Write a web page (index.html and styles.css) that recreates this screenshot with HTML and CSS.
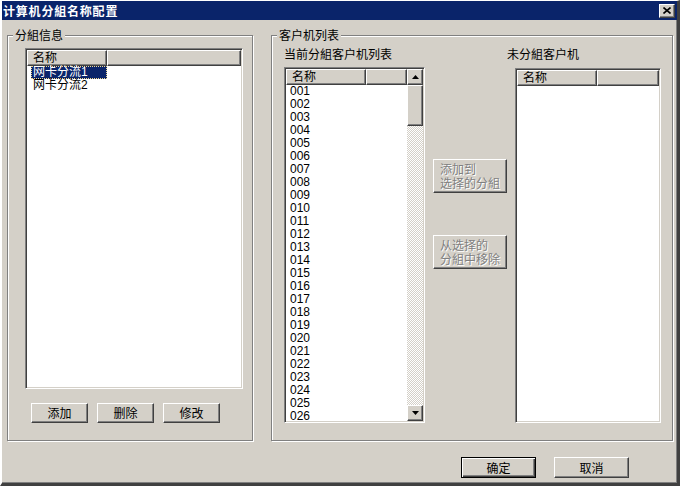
FILE: index.html
```html
<!DOCTYPE html>
<html lang="zh-CN">
<head>
  <meta charset="UTF-8">
  <link rel="stylesheet" href="styles.css">
  <title>计算机分組名称配置</title>
</head>
<body>
  <div class="window">
    <div class="titlebar">
      <span class="title">计算机分組名称配置</span>
      <button class="close-btn" aria-label="关闭">
        <svg width="8" height="7" viewBox="0 0 8 7"><path d="M0.5 0.5 L7.5 6.5 M7.5 0.5 L0.5 6.5" stroke="#000" stroke-width="1.6" fill="none"/></svg>
      </button>
    </div>

    <div class="client">
      <div class="groups">
        <fieldset class="group group-left">
          <legend>分組信息</legend>
          <div class="listview lv-left">
            <div class="lv-header">
              <div class="lv-col">名称</div>
              <div class="lv-col lv-fill"></div>
            </div>
            <ul class="lv-rows">
              <li><span class="selected">网卡分流1</span></li>
              <li><span>网卡分流2</span></li>
            </ul>
          </div>
          <div class="btn-row">
            <button class="btn btn-small">添加</button>
            <button class="btn btn-small">删除</button>
            <button class="btn btn-small">修改</button>
          </div>
        </fieldset>

        <fieldset class="group group-right">
          <legend>客户机列表</legend>
          <div class="client-cols">
            <div class="col-current">
              <div class="col-label">当前分組客户机列表</div>
              <div class="listview lv-current">
                <div class="lv-main">
                  <div class="lv-header">
                    <div class="lv-col">名称</div>
                    <div class="lv-col lv-fill"></div>
                  </div>
                  <ul class="lv-rows lv-numbers">
                    <li><span>001</span></li>
                    <li><span>002</span></li>
                    <li><span>003</span></li>
                    <li><span>004</span></li>
                    <li><span>005</span></li>
                    <li><span>006</span></li>
                    <li><span>007</span></li>
                    <li><span>008</span></li>
                    <li><span>009</span></li>
                    <li><span>010</span></li>
                    <li><span>011</span></li>
                    <li><span>012</span></li>
                    <li><span>013</span></li>
                    <li><span>014</span></li>
                    <li><span>015</span></li>
                    <li><span>016</span></li>
                    <li><span>017</span></li>
                    <li><span>018</span></li>
                    <li><span>019</span></li>
                    <li><span>020</span></li>
                    <li><span>021</span></li>
                    <li><span>022</span></li>
                    <li><span>023</span></li>
                    <li><span>024</span></li>
                    <li><span>025</span></li>
                    <li><span>026</span></li>
                  </ul>
                </div>
                <div class="scrollbar">
                  <div class="sb-btn">
                    <svg width="7" height="4" viewBox="0 0 7 4"><polygon points="0,4 7,4 3.5,0" fill="#000"/></svg>
                  </div>
                  <div class="sb-thumb"></div>
                  <div class="sb-track"></div>
                  <div class="sb-btn">
                    <svg width="7" height="4" viewBox="0 0 7 4"><polygon points="0,0 7,0 3.5,4" fill="#000"/></svg>
                  </div>
                </div>
              </div>
            </div>

            <div class="col-actions">
              <button class="btn btn-move" disabled>添加到<br>选择的分組</button>
              <button class="btn btn-move" disabled>从选择的<br>分組中移除</button>
            </div>

            <div class="col-free">
              <div class="col-label">未分組客户机</div>
              <div class="listview lv-free">
                <div class="lv-header">
                  <div class="lv-col">名称</div>
                  <div class="lv-col lv-fill"></div>
                </div>
              </div>
            </div>
          </div>
        </fieldset>
      </div>

      <div class="dialog-btns">
        <button class="btn btn-dialog btn-default">确定</button>
        <button class="btn btn-dialog">取消</button>
      </div>
    </div>
  </div>
</body>
</html>
```

FILE: styles.css
```css
body {
  margin: 0;
  background: #d4d0c8;
  font-family: "Liberation Sans", "Noto Sans CJK SC", sans-serif;
  font-size: 12px;
  color: #000;
}

.window {
  width: 680px;
  height: 486px;
  box-sizing: border-box;
  background: #d4d0c8;
  border-style: solid;
  border-width: 1px 3px 3px 2px;
  border-color: #fff #404040 #404040 #fff;
  box-shadow: inset -1px -1px #808080;
  display: flex;
  flex-direction: column;
}

/* title bar */
.titlebar {
  height: 19px;
  background: #0a246a;
  display: flex;
  align-items: center;
  justify-content: space-between;
  padding: 0 2px 0 1px;
}

.title {
  color: #fff;
  font-family: "Noto Sans CJK SC", sans-serif;
  font-weight: bold;
  font-size: 12px;
  letter-spacing: 0.8px;
  line-height: 19px;
}

.close-btn {
  width: 16px;
  height: 14px;
  padding: 0;
  background: #d4d0c8;
  border: 1px solid;
  border-color: #fff #404040 #404040 #fff;
  box-shadow: inset -1px -1px #808080;
  display: flex;
  align-items: center;
  justify-content: center;
}

/* client area */
.client {
  flex: 1;
  display: flex;
  flex-direction: column;
  padding: 8px 4px 0 5px;
}

.groups {
  display: flex;
  gap: 18px;
  height: 413px;
}

.group {
  box-sizing: border-box;
  height: 100%;
  margin: 0;
  padding: 0;
  min-width: 0;
  border: 1px solid #808080;
  box-shadow: inset 1px 1px #fff, 1px 1px #fff;
}

.group legend {
  margin-left: 5px;
  padding: 0 2px;
  background: #d4d0c8;
  line-height: 14px;
  font-family: "Noto Sans CJK SC", sans-serif;
}

.group-left {
  width: 246px;
}

.group-right {
  flex: 1;
}

/* list views */
.listview {
  box-sizing: border-box;
  background: #fff;
  border: 1px solid;
  border-color: #808080 #fff #fff #808080;
  padding: 1px;
  box-shadow: inset 1px 1px #404040, inset -1px -1px #d4d0c8;
  overflow: hidden;
}

.lv-left {
  width: 218px;
  height: 341px;
  margin: 6px 0 0 17px;
}

.lv-header {
  display: flex;
  height: 16px;
}

.lv-col {
  box-sizing: border-box;
  width: 80px;
  background: #d4d0c8;
  border: 1px solid;
  border-color: #fff #404040 #404040 #fff;
  box-shadow: inset -1px -1px #808080;
  padding-left: 5px;
  line-height: 14px;
}

.lv-fill {
  flex: 1;
  width: auto;
}

.lv-rows {
  list-style: none;
  margin: 0;
  padding: 0;
}

.lv-rows li {
  height: 13px;
  padding-left: 4px;
  white-space: nowrap;
}

.lv-rows span {
  display: block;
  box-sizing: border-box;
  height: 13px;
  line-height: 11px;
  padding-left: 1px;
  border: 1px dotted transparent;
}

.lv-numbers li {
  padding-left: 2px;
}

.lv-rows span.selected {
  width: 76px;
  background: #0a246a;
  color: #fff;
  border-color: #f0d890;
}

/* right group columns */
.client-cols {
  display: flex;
  padding-left: 12px;
}

.col-label {
  margin-top: 5px;
  height: 14px;
  line-height: 14px;
  font-family: "Noto Sans CJK SC", sans-serif;
}

.col-current {
  width: 141px;
}

.lv-current {
  display: flex;
  height: 356px;
  margin-top: 6px;
}

.lv-main {
  flex: 1;
  min-width: 0;
  overflow: hidden;
}

.scrollbar {
  width: 16px;
  display: flex;
  flex-direction: column;
  background: repeating-conic-gradient(#d4d0c8 0 25%, #fff 0 50%) 0 0 / 2px 2px;
}

.sb-btn,
.sb-thumb {
  box-sizing: border-box;
  background: #d4d0c8;
  border: 1px solid;
  border-color: #fff #404040 #404040 #fff;
  box-shadow: inset -1px -1px #808080;
}

.sb-btn {
  height: 16px;
  display: flex;
  align-items: center;
  justify-content: center;
}

.sb-thumb {
  height: 41px;
}

.sb-track {
  flex: 1;
}

.col-actions {
  width: 74px;
  margin-left: 8px;
  display: flex;
  flex-direction: column;
  gap: 42px;
  padding-top: 117px;
}

.col-free {
  width: 153px;
}

.lv-free {
  width: 146px;
  height: 355px;
  margin: 7px 0 0 8px;
}

/* buttons */
.btn {
  font-family: "Noto Sans CJK SC", sans-serif;
  font-size: 12px;
  color: #000;
  background: #d4d0c8;
  border: 1px solid;
  border-color: #fff #404040 #404040 #fff;
  box-shadow: inset -1px -1px #808080;
  padding: 0;
}

.btn-row {
  display: flex;
  gap: 9px;
  margin: 14px 0 0 23px;
}

.btn-small {
  width: 57px;
  height: 20px;
  line-height: 16px;
}

.btn-move {
  width: 74px;
  height: 34px;
  text-align: left;
  padding-left: 6px;
  line-height: 14px;
  color: #808080;
  text-shadow: 1px 1px #fff;
}

.dialog-btns {
  display: flex;
  justify-content: flex-end;
  gap: 18px;
  margin-top: 16px;
  padding-right: 44px;
}

.btn-dialog {
  width: 75px;
  height: 21px;
}

.btn-default {
  border-color: #000;
  box-shadow: inset 1px 1px #fff, inset -1px -1px #404040, inset -2px -2px #808080;
}
```
